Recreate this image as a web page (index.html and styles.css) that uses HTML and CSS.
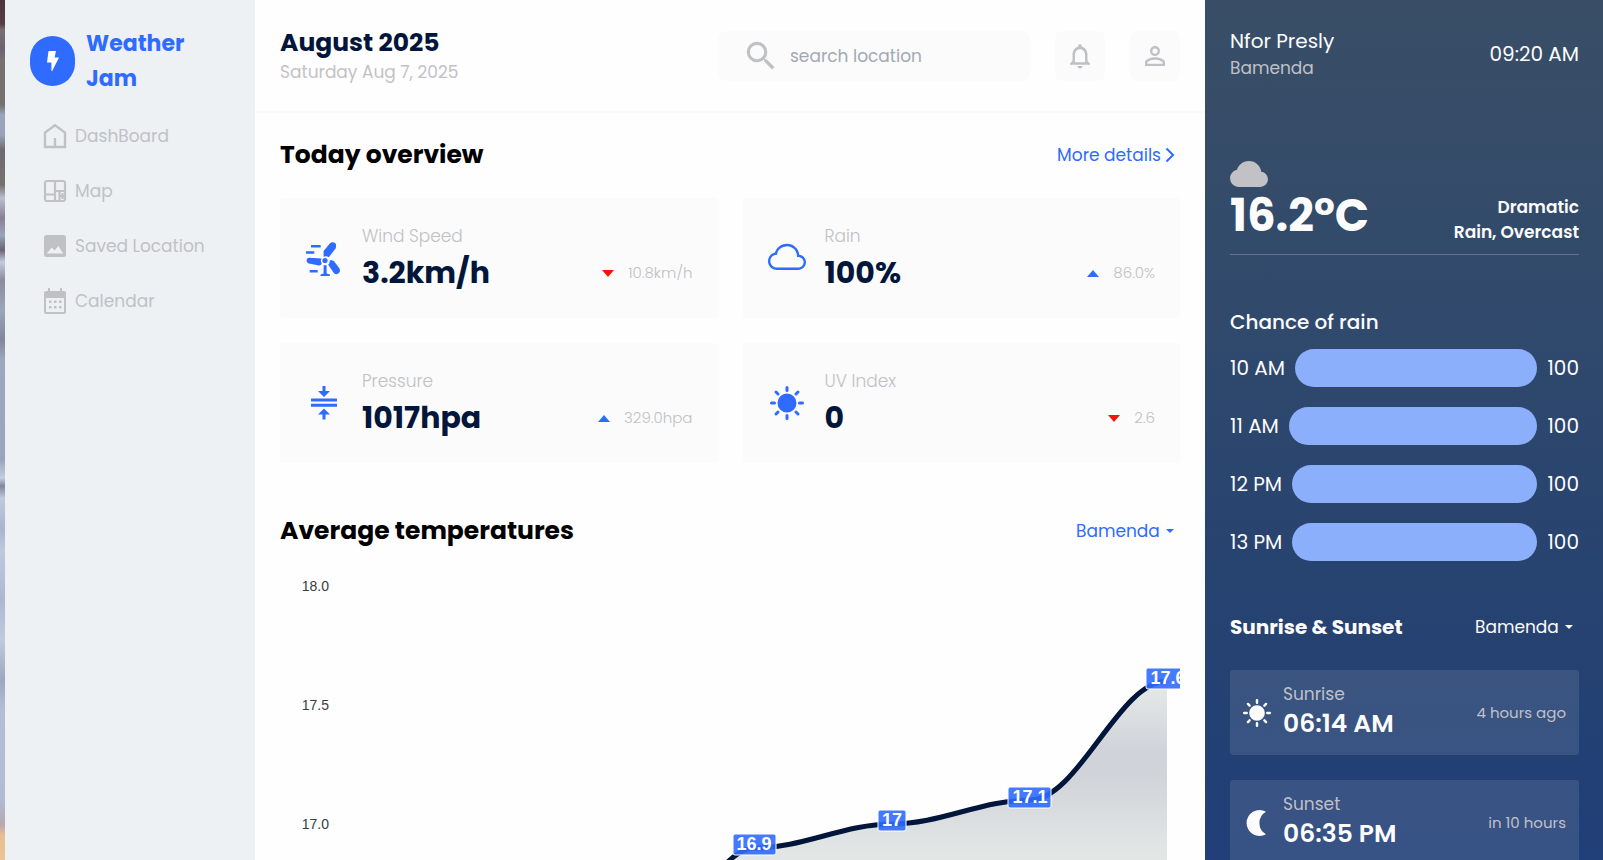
FILE: index.html
```html
<!DOCTYPE html>
<html lang="en">
  <head>
    <meta charset="UTF-8" />
    <meta name="viewport" content="width=device-width, initial-scale=1.0" />
    <title>Weather Jam</title>
    <link rel="stylesheet" href="styles.css">
  </head>
  <body>
    <div class="app">
      <aside class="sidebar">
        <a class="brand" href="#">
          <span class="brand-logo">
            <svg width="12" height="20" viewBox="0 0 12 20"><path d="M1.5 0h7.5L7.6 6.4H12L5.2 20H4.4v-8.600H0z" fill="#fff" /></svg>
          </span>
          <span class="brand-name">Weather Jam</span>
        </a>

        <nav class="menu">
          <a href="#">
            <svg width="24" height="26" viewBox="0 0 24 26" fill="none" stroke="currentColor" stroke-width="2.400"><path d="M2 24V9.500L12 2.300l10 7.200V24zM12 24v-9" /></svg>
            DashBoard
          </a>
          <a href="#">
            <svg width="24" height="24" viewBox="0 0 24 24" fill="none" stroke="currentColor" stroke-width="2.200"><rect x="2" y="2" width="20" height="20" rx="2" /><path d="M12 2v20M2 15.500h10M12 12h10M16.500 12v10M16.500 17H22M19.500 14v6" /></svg>
            Map
          </a>
          <a href="#">
            <svg width="24" height="24" viewBox="0 0 24 24" fill="currentColor" fill-rule="evenodd"><path d="M3.500 1h17A2.500 2.500 0 0 1 23 3.500v17a2.500 2.500 0 0 1-2.500 2.500h-17A2.500 2.500 0 0 1 1 20.500v-17A2.500 2.500 0 0 1 3.500 1zM3.700 19.500h16.600l-5-7.500-3.800 4.500-2.700-3z" /></svg>
            Saved Location
          </a>
          <a href="#">
            <svg width="24" height="26" viewBox="0 0 24 26" fill="currentColor" fill-rule="evenodd"><path d="M5 0h2v3h10V0h2v3h2a2 2 0 0 1 2 2v19a2 2 0 0 1-2 2H3a2 2 0 0 1-2-2V5a2 2 0 0 1 2-2h2zM3 10v14h18V10z" /><path d="M6 12.500h2.500V15H6zM11 12.500h2.500V15H11zM16 12.500h2.500V15H16zM6 18h2.500v2.500H6zM11 18h2.500v2.500H11zM16 18h2.500v2.500H16z" /></svg>
            Calendar
          </a>
        </nav>
      </aside>

      <main class="main">
        <header class="topbar">
          <div class="topbar-date">
            <h1>August 2025</h1>
            <p>Saturday Aug 7, 2025</p>
          </div>
          <label class="search">
            <svg width="38" height="38" viewBox="0 0 24 24" fill="currentColor"><path d="M15.500 14h-.79l-.28-.27A6.471 6.471 0 0 0 16 9.500 6.500 6.500 0 1 0 9.500 16c1.610 0 3.090-.59 4.230-1.570l.27.28v.79l5 4.990L20.490 19l-4.990-5zm-6 0C7.010 14 5 11.990 5 9.500S7.010 5 9.500 5 14 7.010 14 9.500 11.990 14 9.500 14z" /></svg>
            <input type="text" placeholder="search location" aria-label="search location" />
          </label>
          <button class="icon-btn" type="button" aria-label="Notifications">
            <svg width="30" height="30" viewBox="0 0 24 24" fill="currentColor"><path d="M12 22c1.100 0 2-.9 2-2h-4c0 1.100.9 2 2 2zm6-6v-5c0-3.070-1.630-5.640-4.500-6.320V4c0-.83-.67-1.500-1.500-1.500s-1.500.67-1.500 1.500v.68C7.640 5.360 6 7.920 6 11v5l-2 2v1h16v-1l-2-2zm-2 1H8v-6c0-2.480 1.510-4.500 4-4.500s4 2.020 4 4.500v6z" /></svg>
          </button>
          <button class="icon-btn" type="button" aria-label="Profile">
            <svg width="30" height="30" viewBox="0 0 24 24" fill="currentColor"><path d="M12 5.900a2.100 2.100 0 1 1 0 4.200 2.100 2.100 0 0 1 0-4.200m0 9c2.970 0 6.100 1.460 6.100 2.100v1.100H5.900V17c0-.64 3.130-2.100 6.100-2.100M12 4C9.790 4 8 5.790 8 8s1.790 4 4 4 4-1.790 4-4-1.790-4-4-4zm0 9c-2.670 0-8 1.340-8 4v3h16v-3c0-2.660-5.330-4-8-4z" /></svg>
          </button>
        </header>

        <section class="overview">
          <div class="section-head">
            <h2>Today overview</h2>
            <a class="more" href="#">More details
              <svg width="10" height="16" viewBox="0 0 10 16" fill="none" stroke="currentColor" stroke-width="2"><path d="M1.500 1.500L8 8l-6.500 6.500" /></svg>
            </a>
          </div>

          <div class="cards">
            <article class="card">
              <svg width="38" height="38" viewBox="-1 -3 38 38" fill="#2f6bff"><path d="M5 3h9.700v2.500H5zM0 9.300h8.300v2.500H0zM3.700 28h8v2.500h-8zM17.600 14.800V9l5.800-7C25.700-1 31 .3 30 4.500c0 1.300-.4 2.200-1.200 3.100l-6 7.600a5 5 0 0 0-5.200-.4zM15.600 16.400a4.500 4.500 0 0 0 .2 5c-1 1.800-2.200 2.300-4 1.800L2.800 21.500C-.3 20.500 0 16 3 15.800zM23.600 18.400c2.500-.2 4 .2 5.400 2l4.500 6.200c2 4-2.500 7.300-5.500 4.600l-5.800-8.400a4.500 4.500 0 0 0 1.400-4.400zM17.600 23.200h3v8.300l3.400 1V34h-9.500v-1.500l3.100-1z" /><circle cx="19" cy="18.500" r="2.600" /></svg>
              <div class="card-info">
                <h3>Wind Speed</h3>
                <div class="card-row">
                  <strong>3.2km/h</strong>
                  <span class="trend down">10.8km/h</span>
                </div>
              </div>
            </article>

            <article class="card">
              <svg width="38" height="38" viewBox="0 0 16 16" fill="#2f6bff"><path d="M4.406 3.342A5.530 5.530 0 0 1 8 2c2.690 0 4.923 2 5.166 4.579C14.758 6.804 16 8.137 16 9.773 16 11.569 14.502 13 12.687 13H3.781C1.708 13 0 11.366 0 9.318c0-1.763 1.266-3.223 2.942-3.593.143-.863.698-1.723 1.464-2.383zm.653.757c-.757.653-1.153 1.440-1.153 2.056v.448l-.445.049C2.064 6.805 1 7.952 1 9.318 1 10.785 2.230 12 3.781 12h8.906C13.980 12 15 10.988 15 9.773c0-1.216-1.020-2.228-2.313-2.228h-.5v-.5C12.188 4.825 10.328 3 8 3a4.530 4.530 0 0 0-2.941 1.100z" /></svg>
              <div class="card-info">
                <h3>Rain</h3>
                <div class="card-row">
                  <strong>100%</strong>
                  <span class="trend up">86.0%</span>
                </div>
              </div>
            </article>

            <article class="card">
              <svg width="38" height="38" viewBox="0 0 38 38" fill="#2f6bff"><path d="M6 14.500h26v3H6zM6 19.700h26v3H6zM17.500 2h3v5H25l-6 6-6-6h4.500zM17.500 35.500h3v-5H25l-6-6-6 6h4.500z" /></svg>
              <div class="card-info">
                <h3>Pressure</h3>
                <div class="card-row">
                  <strong>1017hpa</strong>
                  <span class="trend up">329.0hpa</span>
                </div>
              </div>
            </article>

            <article class="card">
              <svg width="38" height="38" viewBox="0 0 38 38" fill="#2f6bff" stroke="#2f6bff" stroke-width="3" stroke-linecap="round"><circle cx="19" cy="19" r="8" /><path d="M19 3.500v3M19 31.500v3M3.500 19h3M31.500 19h3M8 8l2 2M28 28l2 2M8 30l2-2M28 10l2-2" /></svg>
              <div class="card-info">
                <h3>UV Index</h3>
                <div class="card-row">
                  <strong>0</strong>
                  <span class="trend down">2.6</span>
                </div>
              </div>
            </article>
          </div>
        </section>

        <section class="temperatures">
          <div class="section-head">
            <h2>Average temperatures</h2>
            <span class="dropdown">
              <select aria-label="Temperature location"><option>Bamenda</option></select>
            </span>
          </div>

          <svg class="chart" viewBox="0 0 900 480" role="img" aria-label="Average temperatures chart">
            <defs>
              <linearGradient id="area" gradientUnits="userSpaceOnUse" x1="0" y1="120" x2="0" y2="480">
                <stop offset="0" stop-color="#e5eae8" />
                <stop offset="0.200" stop-color="#cfd3da" />
                <stop offset="0.270" stop-color="#d1d4d9" />
                <stop offset="0.480" stop-color="#e2e7e6" />
                <stop offset="1" stop-color="#e5eae8" />
              </linearGradient>
            </defs>
            <g class="axis">
              <text x="49" y="30">18.0</text>
              <text x="49" y="149">17.5</text>
              <text x="49" y="268">17.0</text>
            </g>
            <path fill="url(#area)" d="M337 430C385 430 427 287 475 287C523 287 564 263 612 263C660 263 702 239 750 239C798 239 839 120 887 120V480H337z" />
            <path class="line" d="M337 430C385 430 427 287 475 287C523 287 564 263 612 263C660 263 702 239 750 239C798 239 839 120 887 120" />
            <g class="points">
              <rect x="453" y="273" width="43" height="21" rx="2" /><text x="474" y="289">16.9</text>
              <rect x="598" y="249" width="28" height="21" rx="2" /><text x="612" y="265">17</text>
              <rect x="728" y="226" width="43" height="21" rx="2" /><text x="750" y="242">17.1</text>
              <rect x="866" y="107" width="43" height="21" rx="2" /><text x="888" y="123">17.6</text>
            </g>
          </svg>
        </section>
      </main>

      <aside class="panel">
        <div class="profile">
          <div>
            <h2>Nfor Presly</h2>
            <p>Bamenda</p>
          </div>
          <time>09:20 AM</time>
        </div>

        <div class="current">
          <div>
            <svg width="38" height="26" viewBox="0 2 16 11" fill="#c2c2c6"><path d="M4.406 3.342A5.530 5.530 0 0 1 8 2c2.690 0 4.923 2 5.166 4.579C14.758 6.804 16 8.137 16 9.773 16 11.569 14.502 13 12.687 13H3.781C1.708 13 0 11.366 0 9.318c0-1.763 1.266-3.223 2.942-3.593.143-.863.698-1.723 1.464-2.383z" /></svg>
            <strong>16.2°C</strong>
          </div>
          <p>Dramatic<br />Rain, Overcast</p>
        </div>

        <section class="rain">
          <h3>Chance of rain</h3>
          <div class="rain-row"><span>10 AM</span><div class="bar"></div><span>100</span></div>
          <div class="rain-row"><span>11 AM</span><div class="bar"></div><span>100</span></div>
          <div class="rain-row"><span>12 PM</span><div class="bar"></div><span>100</span></div>
          <div class="rain-row"><span>13 PM</span><div class="bar"></div><span>100</span></div>
        </section>

        <section class="sun">
          <div class="sun-head">
            <h3>Sunrise &amp; Sunset</h3>
            <span class="dropdown">
              <select aria-label="Sunrise and sunset location"><option>Bamenda</option></select>
            </span>
          </div>
          <div class="sun-card">
            <svg width="28" height="28" viewBox="2 2 34 34" fill="#fcfcfc" stroke="#fcfcfc" stroke-width="3" stroke-linecap="round"><circle cx="19" cy="19" r="8" /><path d="M19 3.500v3M19 31.500v3M3.500 19h3M31.500 19h3M8 8l2 2M28 28l2 2M8 30l2-2M28 10l2-2" /></svg>
            <div>
              <h4>Sunrise</h4>
              <strong>06:14 AM</strong>
            </div>
            <span>4 hours ago</span>
          </div>
          <div class="sun-card">
            <svg width="28" height="28" viewBox="-4 -1 28 28" fill="#fcfcfc"><path d="M19 1.700A13 13 0 1 0 19 24.300A13 13 0 0 1 19 1.700z" /></svg>
            <div>
              <h4>Sunset</h4>
              <strong>06:35 PM</strong>
            </div>
            <span>in 10 hours</span>
          </div>
        </section>
      </aside>
    </div>
  </body>
</html>
```
FILE: styles.css
```css
* {
  box-sizing: border-box;
  margin: 0;
  padding: 0;
}

body {
  font-family: "Poppins", "Inter", sans-serif;
  font-size: 17px;
  color: #000;
  background: linear-gradient(
    #51333c 0,
    #5a3c46 24px,
    #77706f 30px,
    #6b6272 48px,
    #777071 60px,
    #77706f 105px,
    #9aa5bb 115px,
    #98a2b8 135px,
    #6f6a72 150px,
    #77706f 185px,
    #b9bfce 198px,
    #8a7f95 218px,
    #9aa5bb 235px,
    #6b6272 250px,
    #c4cde0 262px,
    #8b8c9c 280px,
    #9aa5bb 310px,
    #84869a 340px,
    #9da8be 360px,
    #9aa5bb 460px,
    #c4cde2 478px,
    #82869a 486px,
    #c0c9de 498px,
    #a9b5cc 530px,
    #bfc8dd 550px,
    #adb8d0 600px,
    #c0c9de 640px,
    #9da8be 680px,
    #b3bed6 710px,
    #b0bbd4 800px,
    #b8a7ae 825px,
    #e8bd92 835px,
    #edc595 860px
  );
}

a {
  color: inherit;
  text-decoration: none;
}

svg {
  display: block;
  flex-shrink: 0;
}

.app {
  display: grid;
  grid-template-columns: 250px minmax(0, 1fr) 398px;
  height: 100vh;
  margin-left: 5px;
}

/* sidebar */

.sidebar {
  background: #edf1f4;
  padding: 26px 25px;
}

.brand {
  display: flex;
  align-items: center;
  gap: 11px;
  color: #2f6bff;
}

.brand-logo {
  display: flex;
  align-items: center;
  justify-content: center;
  width: 45px;
  height: 50px;
  border-radius: 24px;
  background: #2f6bff;
}

.brand-name {
  width: 120px;
  font-size: 22px;
  font-weight: 700;
  line-height: 35px;
}

.menu {
  padding: 12px 0 0 13px;
}

.menu a {
  display: flex;
  align-items: center;
  gap: 8px;
  height: 55px;
  color: #c0c1c5;
}

/* main column */

.main {
  background: #fefefe;
  overflow-y: auto;
  scrollbar-width: none;
}

.topbar {
  display: flex;
  align-items: center;
  gap: 25px;
  height: 113px;
  border-bottom: 2px solid #fafafa;
  padding: 0 25px;
}

.topbar-date {
  flex: 1;
}

.topbar-date h1 {
  font-size: 25px;
  line-height: 33px;
  color: #02153a;
}

.topbar-date p {
  line-height: 26px;
  color: #c2c2c6;
}

.search {
  display: flex;
  align-items: center;
  gap: 10px;
  width: 312px;
  height: 50px;
  padding: 0 24px;
  border-radius: 8px;
  background: #fbfbfb;
  color: #c0c1c5;
}

.search input {
  width: 100%;
  border: none;
  outline: none;
  background: none;
  font: inherit;
}

.search input::placeholder {
  color: #a2a9b3;
}

.icon-btn {
  display: flex;
  align-items: center;
  justify-content: center;
  width: 50px;
  height: 50px;
  border: none;
  border-radius: 8px;
  background: #fbfbfb;
  color: #c0c1c5;
}

.overview {
  padding: 22px 25px 0;
}

.temperatures {
  padding: 48px 25px 0;
}

.section-head {
  display: flex;
  align-items: center;
  justify-content: space-between;
  height: 40px;
}

.section-head h2 {
  font-size: 25px;
}

.more {
  display: flex;
  align-items: center;
  gap: 4px;
  padding-right: 5px;
  color: #2f6bff;
}

.cards {
  display: grid;
  grid-template-columns: 1fr 1fr;
  gap: 25px;
  padding-top: 23px;
}

.card {
  display: flex;
  align-items: center;
  gap: 19px;
  height: 120px;
  padding: 0 25px;
  border-radius: 3px;
  background: #fbfbfb;
}

.card-info {
  flex: 1;
}

.card-info h3 {
  font-size: 17px;
  font-weight: 300;
  line-height: 30px;
  color: #c0c1c5;
}

.card-row {
  display: flex;
  align-items: center;
  justify-content: space-between;
  line-height: 44px;
}

.card-row strong {
  font-size: 30px;
  color: #02153a;
}

.trend {
  display: flex;
  align-items: center;
  gap: 14px;
  font-size: 15px;
  font-weight: 300;
  color: #c0c1c5;
}

.trend::before {
  content: "";
  border: 6px solid transparent;
}

.trend.up::before {
  border-top: none;
  border-bottom: 7px solid #2f6bff;
}

.trend.down::before {
  border-bottom: none;
  border-top: 7px solid #ee1708;
}

.dropdown {
  display: flex;
  align-items: center;
  gap: 6px;
  padding-right: 6px;
  color: #2f6bff;
}

.dropdown::after {
  content: "";
  border: 4px solid transparent;
  border-top-color: currentColor;
  border-bottom: none;
}

.dropdown select {
  appearance: none;
  border: none;
  background: none;
  color: inherit;
  font: inherit;
}

.chart {
  width: 100%;
  margin-top: 10px;
  font-family: "Liberation Sans", Arial, sans-serif;
}

.axis text {
  text-anchor: end;
  font-size: 14px;
  fill: #373d3f;
}

.line {
  fill: none;
  stroke: #02153a;
  stroke-width: 5;
}

.points rect {
  fill: #2f6bff;
  fill-opacity: 0.9;
  stroke: #fff;
}

.points text {
  text-anchor: middle;
  font-size: 18px;
  font-weight: 700;
  fill: #fff;
}

/* right panel */

.panel {
  padding: 27px 24px 0 25px;
  overflow-y: auto;
  scrollbar-width: none;
  color: #fcfcfc;
  background: linear-gradient(#394e66, #314a6c 35%, #27436f 65%, #213f78);
}

.profile {
  display: flex;
  align-items: center;
  justify-content: space-between;
}

.profile h2 {
  font-size: 20px;
  font-weight: 400;
  line-height: 28px;
}

.profile p {
  line-height: 26px;
  color: #c0c1c9;
}

.profile time {
  font-size: 20px;
}

.current {
  display: flex;
  align-items: flex-end;
  justify-content: space-between;
  padding: 80px 0 9px;
  border-bottom: 1px solid #64748f;
}

.current strong {
  display: block;
  font-size: 45px;
  line-height: 58px;
}

.current p {
  font-weight: 600;
  line-height: 25px;
  text-align: right;
}

.rain {
  display: grid;
  gap: 20px;
  padding-top: 52px;
}

.rain h3 {
  margin-bottom: -8px;
  font-size: 20px;
  font-weight: 500;
  line-height: 30px;
}

.rain-row {
  display: flex;
  gap: 10px;
  font-size: 20px;
  line-height: 38px;
}

.bar {
  flex: 1;
  border-radius: 19px;
  background: #8baffb;
}

.sun {
  padding-top: 48px;
}

.sun-head {
  display: flex;
  align-items: center;
  justify-content: space-between;
  height: 36px;
}

.sun-head h3 {
  font-size: 20px;
}

.sun .dropdown {
  color: #fcfcfc;
}

.sun-card {
  display: flex;
  align-items: center;
  gap: 12px;
  height: 85px;
  margin-top: 25px;
  padding: 0 13px;
  border-radius: 3px;
  background: rgba(255, 255, 255, 0.1);
}

.sun-card div {
  flex: 1;
  padding-bottom: 5px;
}

.sun-card h4 {
  font-size: 17px;
  font-weight: 400;
  line-height: 28px;
  color: #c0c1c9;
}

.sun-card strong {
  font-size: 25px;
  font-weight: 600;
  line-height: 32px;
}

.sun-card span {
  font-size: 15px;
  color: #c0c1c9;
}
```
